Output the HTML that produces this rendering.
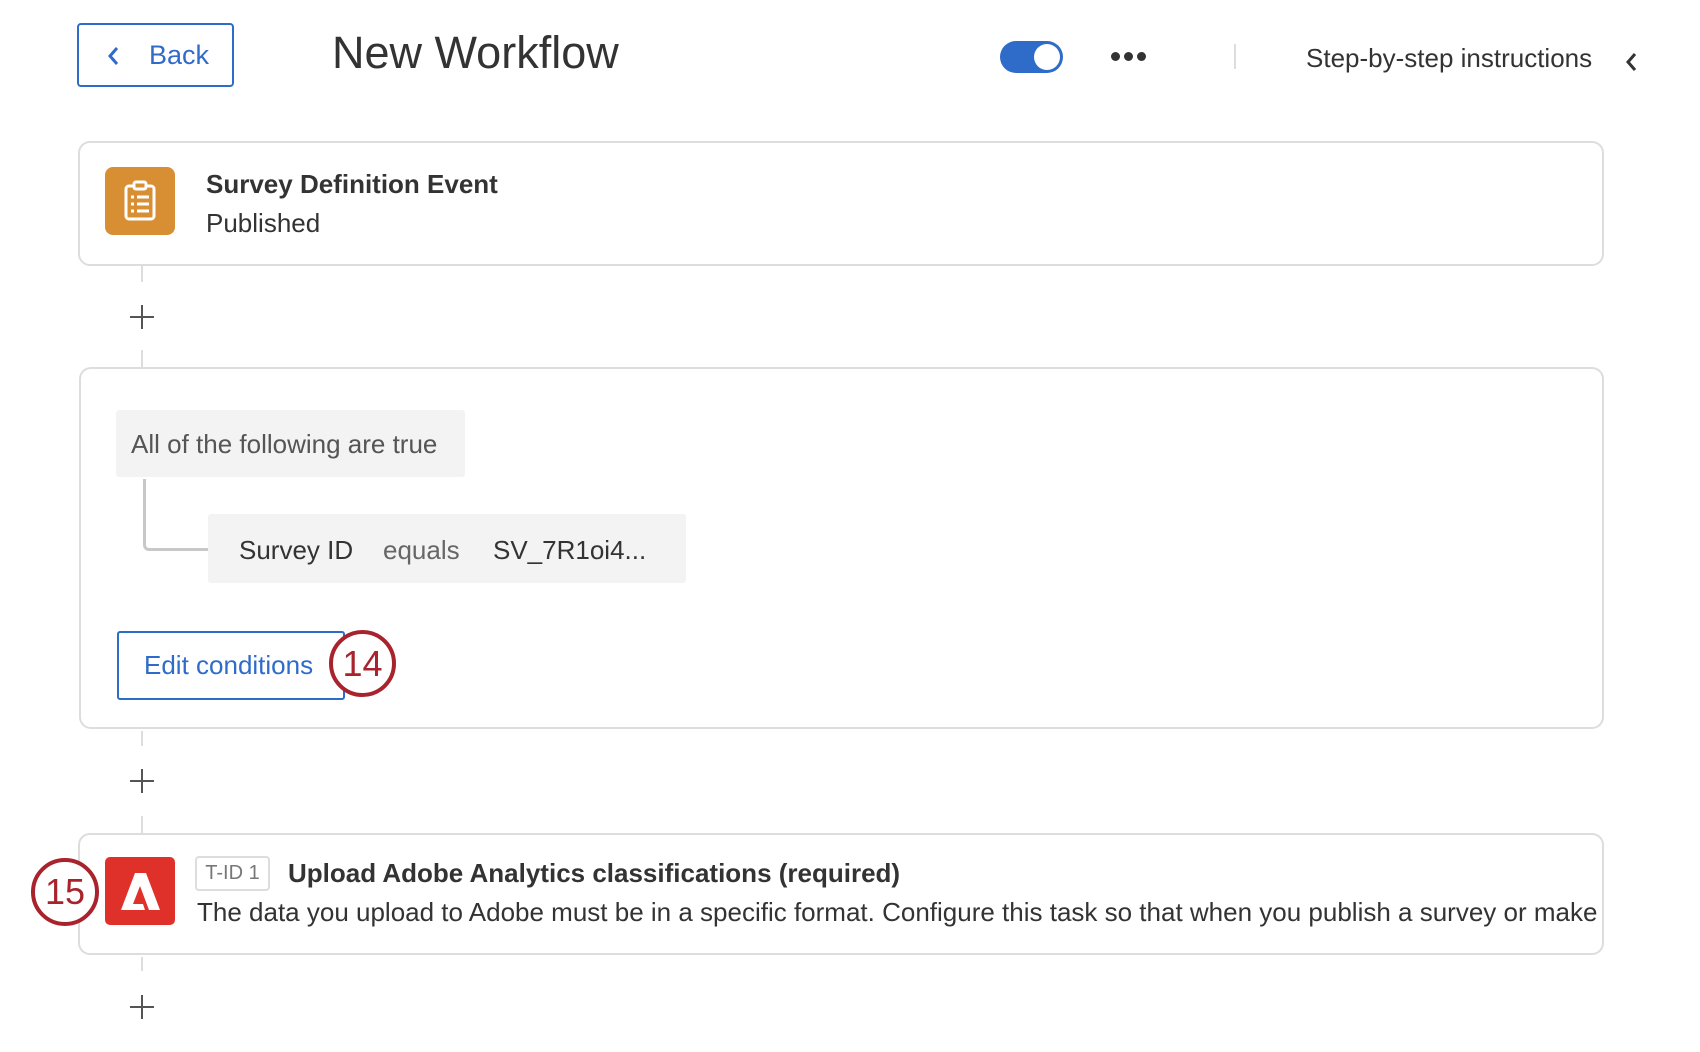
<!DOCTYPE html>
<html><head><meta charset="utf-8"><style>
*{box-sizing:border-box;margin:0;padding:0}
body{width:1700px;height:1052px;background:#fff;font-family:"Liberation Sans",sans-serif;color:#333;position:relative;overflow:hidden}
.a{position:absolute}
.card{position:absolute;border:2px solid #ddd;border-radius:12px;background:#fff}
.vl{position:absolute;left:141px;width:2px;background:#ddd}
.plus{position:absolute;left:130px;width:24px;height:24px}
.plus:before,.plus:after{content:"";position:absolute;background:#555}
.plus:before{left:11px;top:0;width:2px;height:24px}
.plus:after{top:11px;left:0;height:2px;width:24px}
.circ{position:absolute;border:4px solid #a8232c;border-radius:50%;color:#a8232c;font-size:36px;display:flex;align-items:center;justify-content:center;background:#fff}
</style></head><body>
<div class="a" style="left:77px;top:23px;width:157px;height:64px;border:2px solid #2f6cc9;border-radius:4px;color:#2f6cc9;font-size:27px;">
<svg class="a" style="left:27px;top:20px" width="16" height="22" viewBox="0 0 16 22"><path d="M11 3 L4 11 L11 19" fill="none" stroke="#2f6cc9" stroke-width="3"/></svg>
<span class="a" style="left:70px;top:15px">Back</span></div>
<div class="a" style="left:332px;top:27px;font-size:45px;color:#333">New Workflow</div>
<div class="a" style="left:1000px;top:41px;width:63px;height:32px;border-radius:16px;background:#2f6cc9"><div class="a" style="right:3px;top:3px;width:26px;height:26px;border-radius:50%;background:#fff"></div></div>
<div class="a" style="left:1111px;top:52px;width:40px;height:10px">
<div class="a" style="left:0;top:0;width:9px;height:9px;border-radius:50%;background:#333"></div>
<div class="a" style="left:13px;top:0;width:9px;height:9px;border-radius:50%;background:#333"></div>
<div class="a" style="left:26px;top:0;width:9px;height:9px;border-radius:50%;background:#333"></div></div>
<div class="a" style="left:1234px;top:44px;width:2px;height:25px;background:#ddd"></div>
<div class="a" style="left:1306px;top:43px;font-size:26px;color:#333">Step-by-step instructions</div>
<svg class="a" style="left:1624px;top:51px" width="16" height="22" viewBox="0 0 16 22"><path d="M11 3 L4 11 L11 19" fill="none" stroke="#333" stroke-width="3"/></svg>

<div class="card" style="left:78px;top:141px;width:1526px;height:125px"></div>
<div class="a" style="left:105px;top:167px;width:70px;height:68px;border-radius:8px;background:#d88f33">
<svg class="a" style="left:17px;top:13px" width="36" height="42" viewBox="0 0 36 42"><rect x="4" y="6" width="28" height="33" rx="3" fill="none" stroke="#fff" stroke-width="3"/><rect x="12" y="2" width="12" height="7" rx="2" fill="#d88f33" stroke="#fff" stroke-width="3"/><g stroke="#fff" stroke-width="3"><line x1="9" y1="17" x2="12" y2="17"/><line x1="15" y1="17" x2="27" y2="17"/><line x1="9" y1="24" x2="12" y2="24"/><line x1="15" y1="24" x2="27" y2="24"/><line x1="9" y1="31" x2="12" y2="31"/><line x1="15" y1="31" x2="27" y2="31"/></g></svg></div>
<div class="a" style="left:206px;top:169px;font-size:26px;font-weight:bold">Survey Definition Event</div>
<div class="a" style="left:206px;top:208px;font-size:26px">Published</div>

<div class="vl" style="top:266px;height:16px"></div>
<div class="plus" style="top:305px"></div>
<div class="vl" style="top:350px;height:17px"></div>

<div class="card" style="left:79px;top:367px;width:1525px;height:362px"></div>
<div class="a" style="left:116px;top:410px;width:349px;height:67px;background:#f3f3f3;border-radius:3px"></div>
<div class="a" style="left:131px;top:429px;font-size:26px;color:#555">All of the following are true</div>
<div class="a" style="left:143px;top:479px;width:65px;height:72px;border-left:3px solid #c8c8c8;border-bottom:3px solid #c8c8c8;border-bottom-left-radius:6px"></div>
<div class="a" style="left:208px;top:514px;width:478px;height:69px;background:#f3f3f3;border-radius:3px"></div>
<div class="a" style="left:239px;top:535px;font-size:26px;color:#333">Survey ID</div>
<div class="a" style="left:383px;top:535px;font-size:26px;color:#666">equals</div>
<div class="a" style="left:493px;top:535px;font-size:26px;color:#333">SV_7R1oi4...</div>
<div class="a" style="left:117px;top:631px;width:228px;height:69px;border:2px solid #2f6cc9;border-radius:3px"></div>
<div class="a" style="left:144px;top:650px;font-size:26px;color:#2f6cc9">Edit conditions</div>
<div class="circ" style="left:329px;top:630px;width:67px;height:67px">14</div>

<div class="vl" style="top:731px;height:15px"></div>
<div class="plus" style="top:769px"></div>
<div class="vl" style="top:816px;height:17px"></div>

<div class="card" style="left:78px;top:833px;width:1526px;height:122px;overflow:hidden">
<div class="a" style="left:117px;top:62px;font-size:26px;white-space:nowrap;color:#333">The data you upload to Adobe must be in a specific format. Configure this task so that when you publish a survey or make changes</div></div>
<div class="a" style="left:105px;top:857px;width:70px;height:68px;border-radius:5px;background:#e0302a">
<svg class="a" style="left:13px;top:12px" width="45" height="45" viewBox="0 0 45 45"><path d="M17 4 H28 L42 41 H31 L22 17 L15 35 H25 L27 41 H3 Z" fill="#fff"/></svg></div>
<div class="circ" style="left:31px;top:858px;width:68px;height:68px">15</div>
<div class="a" style="left:195px;top:856px;width:75px;height:35px;border:2px solid #ddd;border-radius:4px;font-size:20px;color:#777;text-align:center;line-height:31px">T-ID 1</div>
<div class="a" style="left:288px;top:858px;font-size:26px;font-weight:bold">Upload Adobe Analytics classifications (required)</div>

<div class="vl" style="top:957px;height:14px"></div>
<div class="plus" style="top:995px"></div>
</body></html>
